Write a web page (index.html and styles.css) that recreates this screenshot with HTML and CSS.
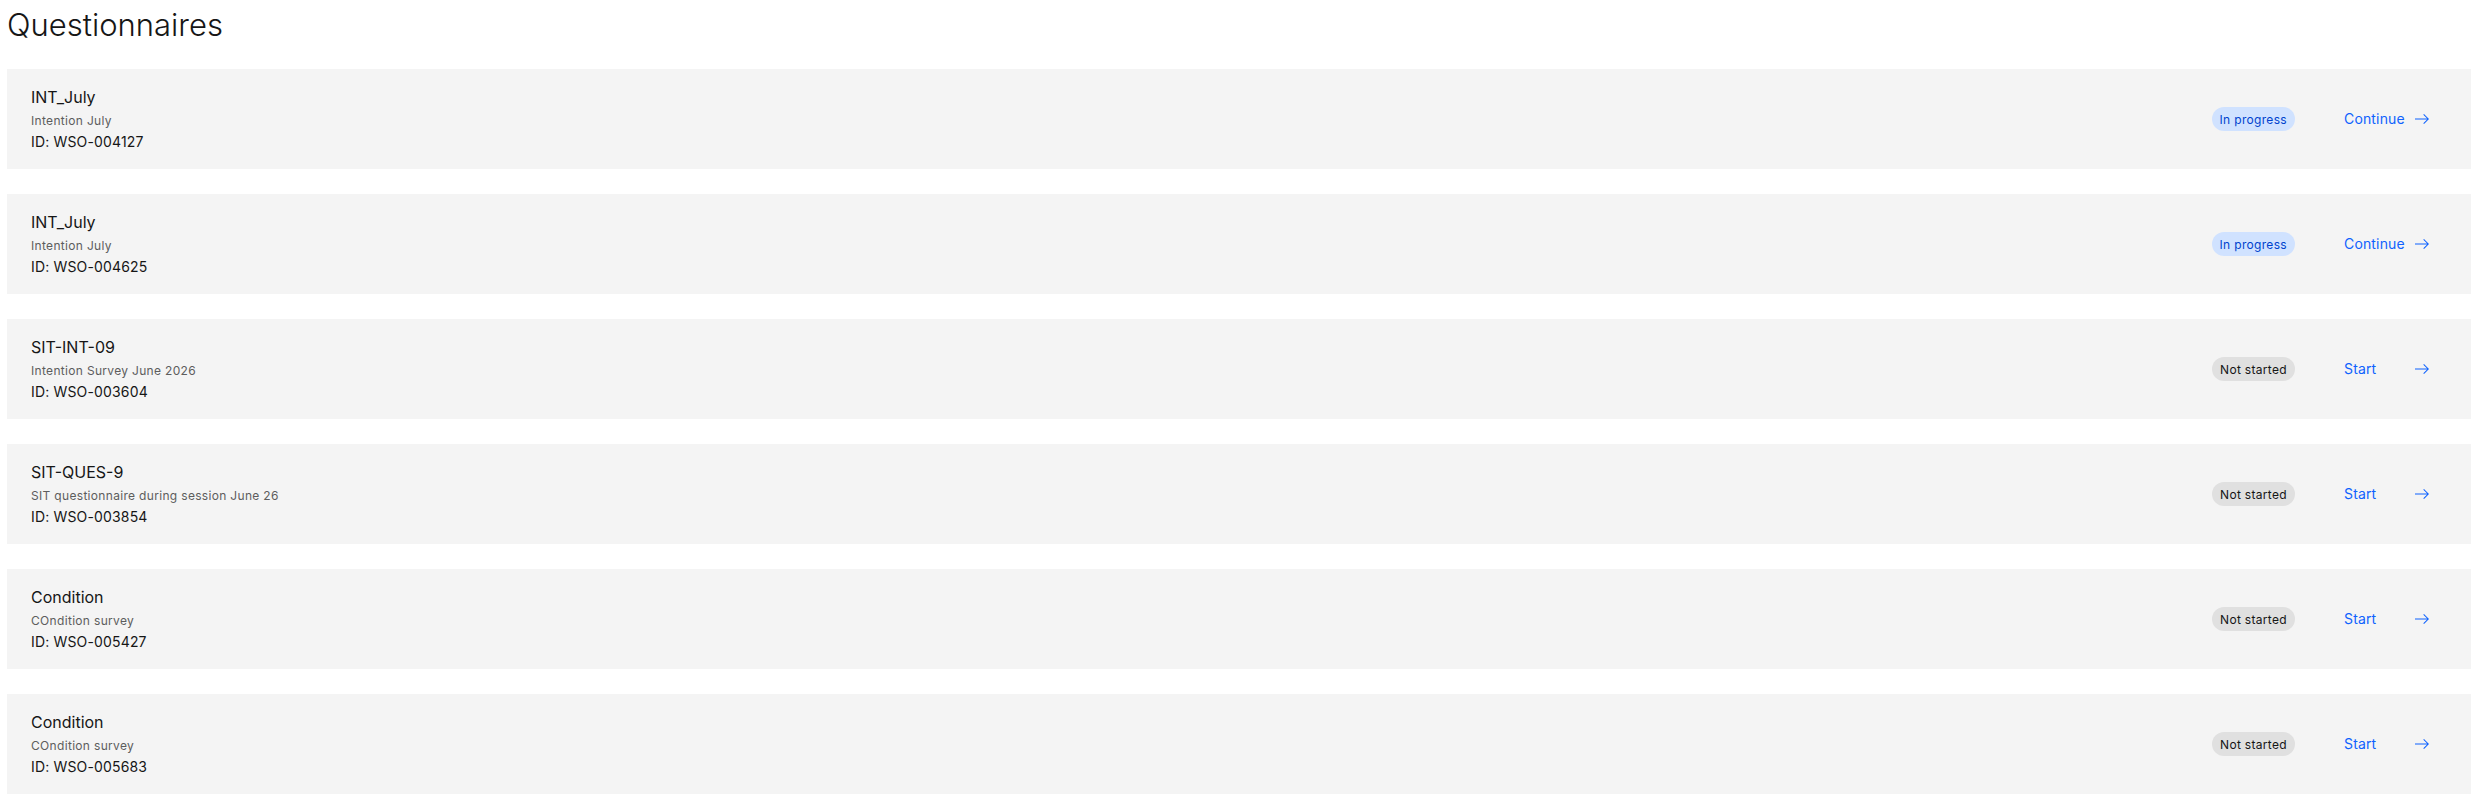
FILE: index.html
```html
<!DOCTYPE html>
<html>
<head>
<meta charset="utf-8">
<title>Questionnaires</title>
<link rel="stylesheet" href="styles.css">
</head>
<body>
<div id="app">
	<main class="page">
		<h1 class="page-title">Questionnaires</h1>

		<ul class="q-list">
			<li class="q-card">
				<div class="q-info">
					<div class="q-name">INT_July</div>
					<div class="q-desc">Intention July</div>
					<div class="q-id">ID: WSO-004127</div>
				</div>
				<div class="q-actions">
					<span class="tag tag-blue">In progress</span>
					<a class="q-link" href="#">Continue
						<svg class="arrow" viewBox="0 0 16 16" width="16" height="16"><path d="M9.3 3.7L13.1 7.5 1 7.5 1 8.5 13.1 8.5 9.3 12.3 10 13 15 8 10 3z"/></svg>
					</a>
				</div>
			</li>
			<li class="q-card">
				<div class="q-info">
					<div class="q-name">INT_July</div>
					<div class="q-desc">Intention July</div>
					<div class="q-id">ID: WSO-004625</div>
				</div>
				<div class="q-actions">
					<span class="tag tag-blue">In progress</span>
					<a class="q-link" href="#">Continue
						<svg class="arrow" viewBox="0 0 16 16" width="16" height="16"><path d="M9.3 3.7L13.1 7.5 1 7.5 1 8.5 13.1 8.5 9.3 12.3 10 13 15 8 10 3z"/></svg>
					</a>
				</div>
			</li>
			<li class="q-card">
				<div class="q-info">
					<div class="q-name">SIT-INT-09</div>
					<div class="q-desc">Intention Survey June 2026</div>
					<div class="q-id">ID: WSO-003604</div>
				</div>
				<div class="q-actions">
					<span class="tag tag-gray">Not started</span>
					<a class="q-link" href="#">Start
						<svg class="arrow" viewBox="0 0 16 16" width="16" height="16"><path d="M9.3 3.7L13.1 7.5 1 7.5 1 8.5 13.1 8.5 9.3 12.3 10 13 15 8 10 3z"/></svg>
					</a>
				</div>
			</li>
			<li class="q-card">
				<div class="q-info">
					<div class="q-name">SIT-QUES-9</div>
					<div class="q-desc">SIT questionnaire during session June 26</div>
					<div class="q-id">ID: WSO-003854</div>
				</div>
				<div class="q-actions">
					<span class="tag tag-gray">Not started</span>
					<a class="q-link" href="#">Start
						<svg class="arrow" viewBox="0 0 16 16" width="16" height="16"><path d="M9.3 3.7L13.1 7.5 1 7.5 1 8.5 13.1 8.5 9.3 12.3 10 13 15 8 10 3z"/></svg>
					</a>
				</div>
			</li>
			<li class="q-card">
				<div class="q-info">
					<div class="q-name">Condition</div>
					<div class="q-desc">COndition survey</div>
					<div class="q-id">ID: WSO-005427</div>
				</div>
				<div class="q-actions">
					<span class="tag tag-gray">Not started</span>
					<a class="q-link" href="#">Start
						<svg class="arrow" viewBox="0 0 16 16" width="16" height="16"><path d="M9.3 3.7L13.1 7.5 1 7.5 1 8.5 13.1 8.5 9.3 12.3 10 13 15 8 10 3z"/></svg>
					</a>
				</div>
			</li>
			<li class="q-card">
				<div class="q-info">
					<div class="q-name">Condition</div>
					<div class="q-desc">COndition survey</div>
					<div class="q-id">ID: WSO-005683</div>
				</div>
				<div class="q-actions">
					<span class="tag tag-gray">Not started</span>
					<a class="q-link" href="#">Start
						<svg class="arrow" viewBox="0 0 16 16" width="16" height="16"><path d="M9.3 3.7L13.1 7.5 1 7.5 1 8.5 13.1 8.5 9.3 12.3 10 13 15 8 10 3z"/></svg>
					</a>
				</div>
			</li>
		</ul>
	</main>
</div>
</body>
</html>
```

FILE: styles.css
```css
html,
body {
	margin: 0;
	padding: 0;
	background: #fff;
}
#app {
	font-family: Inter, 'Noto Sans', Arial, sans-serif;
	-webkit-font-smoothing: antialiased;
	color: #161616;
	font-size: 14px;
}
.page {
	padding: 0 5px 0 7px;
}
.page-title {
	margin: 5px 0 24px;
	font-size: 31px;
	line-height: 40px;
	font-weight: 300;
	color: #161616;
}
.q-list {
	list-style: none;
	margin: 0;
	padding: 0;
	display: flex;
	flex-direction: column;
	gap: 25px;
}
.q-card {
	display: flex;
	align-items: center;
	justify-content: space-between;
	height: 100px;
	box-sizing: border-box;
	padding: 0 41px 0 24px;
	background: #f4f4f4;
}
.q-info {
	align-self: flex-start;
	padding-top: 17px;
}
.q-name {
	font-size: 16px;
	line-height: 22px;
}
.q-desc {
	margin-top: 5px;
	font-size: 12px;
	line-height: 16px;
	letter-spacing: .32px;
	color: #5d5d5d;
}
.q-id {
	margin-top: 3px;
	font-size: 14px;
	line-height: 20px;
	letter-spacing: .16px;
}
.q-actions {
	display: flex;
	align-items: center;
	gap: 49px;
}
.tag {
	display: inline-flex;
	align-items: center;
	justify-content: center;
	box-sizing: border-box;
	min-width: 80px;
	height: 24px;
	padding: 0 8px;
	border-radius: 12px;
	font-size: 12px;
	letter-spacing: .32px;
}
.tag-blue {
	background: #d0e2ff;
	color: #0043ce;
}
.tag-gray {
	background: #e0e0e0;
	color: #161616;
}
.q-link {
	display: flex;
	align-items: center;
	justify-content: space-between;
	width: 86px;
	font-size: 14px;
	line-height: 18px;
	letter-spacing: .16px;
	color: #0f62fe;
	text-decoration: none;
}
.arrow {
	fill: #0f62fe;
	flex: none;
}
```
